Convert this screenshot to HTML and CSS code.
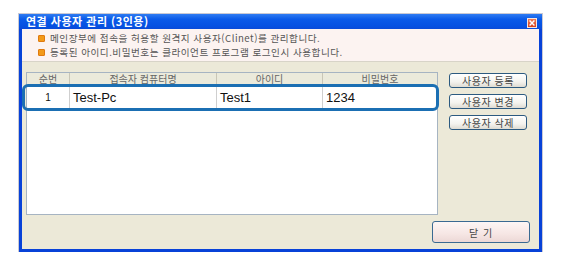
FILE: index.html
```html
<!DOCTYPE html>
<html lang="ko">
<head>
<meta charset="utf-8">
<title>연결 사용자 관리</title>
<link rel="stylesheet" href="styles.css">
</head>
<body>
<div class="window">
  <div class="titlebar">
    <span class="title">연결 사용자 관리 (3인용)</span>
    <span class="close"><svg width="10" height="10" viewBox="0 0 10 10"><path d="M2.6 2.6 L7.4 7.4 M7.4 2.6 L2.6 7.4" stroke="#fff" stroke-width="1.8" stroke-linecap="square"/></svg></span>
  </div>
  <div class="frame">
    <div class="info">
      <div class="info-line"><span class="bullet"></span>메인장부에 접속을 허용할 원격지 사용자(Clinet)를 관리합니다.</div>
      <div class="info-line"><span class="bullet"></span>등록된 아이디.비밀번호는 클라이언트 프로그램 로그인시 사용합니다.</div>
    </div>
    <div class="content">
      <div class="top">
        <div class="list">
          <div class="list-head">
            <div class="hcell">순번</div>
            <div class="hcell">접속자 컴퓨터명</div>
            <div class="hcell">아이디</div>
            <div class="hcell">비밀번호</div>
          </div>
          <div class="list-row">
            <div class="cell num">1</div>
            <div class="cell">Test-Pc</div>
            <div class="cell">Test1</div>
            <div class="cell">1234</div>
            <div class="highlight"></div>
          </div>
        </div>
        <div class="side">
          <button class="btn">사용자 등록</button>
          <button class="btn">사용자 변경</button>
          <button class="btn">사용자 삭제</button>
        </div>
      </div>
      <div class="bottom">
        <button class="btn-close">닫 기</button>
      </div>
    </div>
  </div>
</div>
</body>
</html>
```
FILE: styles.css
```css
html, body {
  margin: 0;
  padding: 0;
  background: #ffffff;
}
body {
  padding: 14px 0 0 19px;
  font-family: "Noto Sans CJK KR", "Noto Sans", sans-serif;
}
.window {
  width: 523px;
  box-shadow: 0 0 0 1px #c9c9d4;
  background: #0842d8;
}
.titlebar {
  height: 15px;
  background: linear-gradient(#2f7cf2, #0a5ae8 35%, #0651e2 80%, #0a4bd8);
  display: flex;
  align-items: center;
  justify-content: space-between;
  padding: 0 5px 0 7px;
}
.title {
  color: #ffffff;
  font-size: 11px;
  font-weight: bold;
  letter-spacing: 0.5px;
  line-height: 15px;
}
.close {
  width: 10px;
  height: 10px;
  background: linear-gradient(#f07a54, #d8421e);
  border: 1px solid #f6e6e0;
  box-sizing: border-box;
  display: flex;
  align-items: center;
  justify-content: center;
  margin-top: 3px;
}
.close svg {
  display: block;
}
.frame {
  border: 3px solid #0842d8;
  border-top: 0;
  background: #ece9d8;
}
.info {
  background: #fcf3f1;
  height: 33px;
  border-bottom: 1px solid #d8d4c8;
  padding: 2px 0 0 16px;
  box-sizing: border-box;
}
.info-line {
  display: flex;
  align-items: center;
  height: 14px;
  line-height: 14px;
  font-size: 9.6px;
  color: #555555;
  letter-spacing: 0.5px;
}
.bullet {
  width: 5px;
  height: 5px;
  border-radius: 1px;
  background: #f29a1a;
  border: 1px solid #e07a10;
  margin-right: 5px;
  flex: none;
}
.content {
  padding: 10px 0 6px 4px;
}
.top {
  display: flex;
  align-items: flex-start;
}
.list {
  width: 412px;
  height: 143px;
  box-sizing: border-box;
  border: 1px solid #a6b4c2;
  background: #ffffff;
}
.list-head {
  display: grid;
  grid-template-columns: 43px 147px 106px 1fr;
  height: 12px;
  background: #ebeadb;
  border-bottom: 1px solid #d7d4c4;
}
.hcell {
  font-size: 10px;
  color: #666666;
  text-align: center;
  line-height: 12px;
  border-right: 1px solid #c9c6b6;
}
.hcell:last-child {
  border-right: 0;
}
.list-row {
  position: relative;
  display: grid;
  grid-template-columns: 43px 147px 106px 1fr;
  height: 23px;
}
.cell {
  font-family: "Liberation Sans", Arial, sans-serif;
  font-size: 13px;
  color: #111111;
  line-height: 23px;
  padding-left: 3px;
  border-right: 1px solid #cfcfcf;
  white-space: nowrap;
}
.cell:last-child {
  border-right: 0;
}
.cell.num {
  font-size: 10px;
  text-align: center;
  padding-left: 0;
}
.highlight {
  position: absolute;
  left: -5px;
  right: -2px;
  top: -2px;
  bottom: -2px;
  border: 3px solid #1b6fb3;
  border-radius: 6px;
  pointer-events: none;
}
.side {
  display: flex;
  flex-direction: column;
  gap: 6px;
  margin: 1px 0 0 11px;
}
.btn {
  width: 78px;
  height: 15px;
  padding: 0;
  border: 1px solid #2c5a80;
  border-radius: 3px;
  background: linear-gradient(#ffffff, #f4f3ee 60%, #dedbd2);
  font-family: "Noto Sans CJK KR", "Noto Sans", sans-serif;
  font-size: 10px;
  line-height: 13px;
  color: #444444;
  letter-spacing: 0.5px;
}
.bottom {
  display: flex;
  justify-content: flex-end;
  padding-right: 9px;
  margin-top: 6px;
}
.btn-close {
  width: 98px;
  height: 22px;
  padding: 0;
  border: 1px solid #3a6a92;
  border-radius: 3px;
  background: linear-gradient(#fdf6f5, #f6e6e4 60%, #ecd8d6);
  font-family: "Noto Sans CJK KR", "Noto Sans", sans-serif;
  font-size: 10px;
  color: #444444;
  letter-spacing: 1px;
}
```
